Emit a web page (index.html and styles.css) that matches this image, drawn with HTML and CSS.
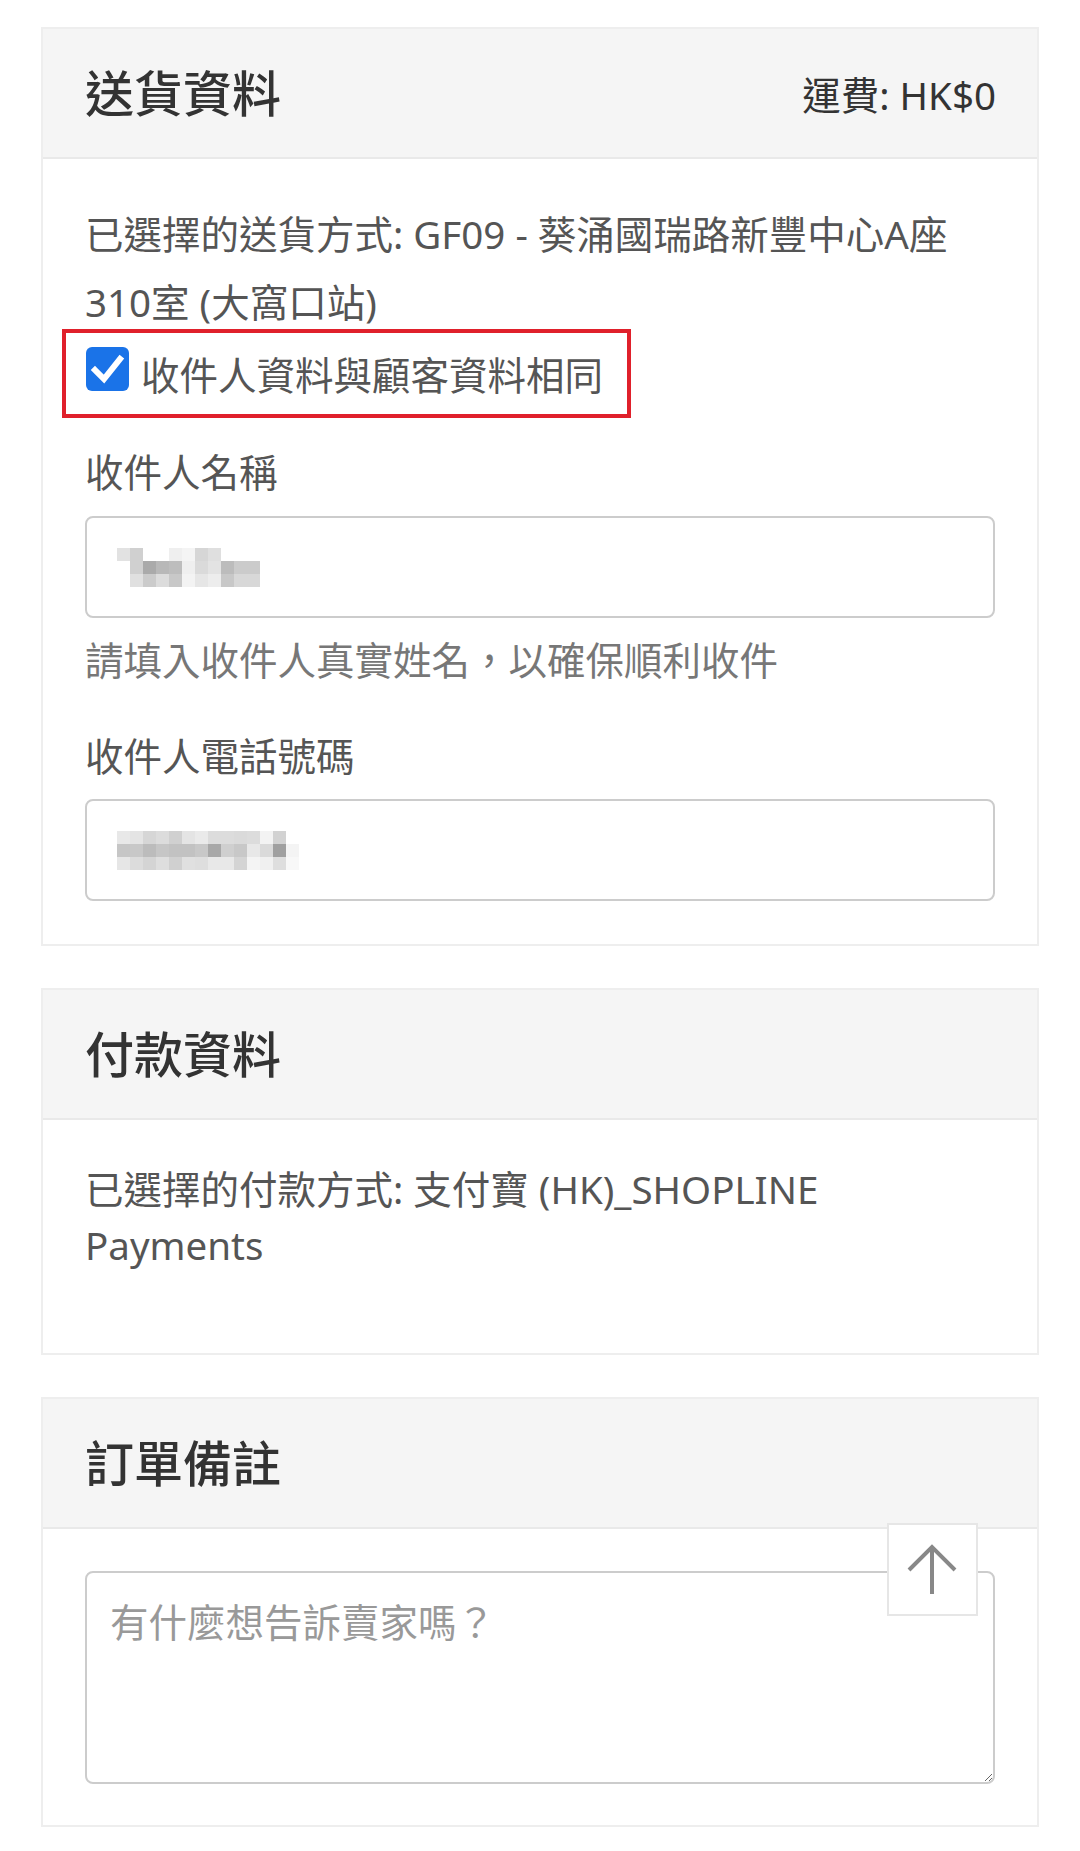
FILE: index.html
```html
<!DOCTYPE html>
<html lang="zh-Hant">
<head>
<meta charset="utf-8">
<title>結帳</title>
<link rel="stylesheet" href="styles.css">
</head>
<body>
<div class="page">
  <section class="card">
    <header class="card-head">
      <h2>送貨資料</h2>
      <span class="fee">運費: HK$0</span>
    </header>
    <div class="card-body">
      <p class="method">已選擇的送貨方式: GF09 - 葵涌國瑞路新豐中心A座310室 (大窩口站)</p>
      <label class="same-row">
        <span class="checkbox"><svg width="43" height="44" viewBox="0 0 43 44"><path d="M9 23 L18 32 L34 12" fill="none" stroke="#fff" stroke-width="6" stroke-linecap="square" stroke-linejoin="miter"/></svg></span>
        <span class="same-text">收件人資料與顧客資料相同</span>
      </label>
      <div class="field-label">收件人名稱</div>
      <div class="input">
        <svg class="mosaic" width="143" height="39" viewBox="0 0 143 39">
          <rect x="0" y="0" width="13" height="13" fill="#e2e2e2"/><rect x="13" y="0" width="13" height="13" fill="#d0d0d0"/><rect x="52" y="0" width="13" height="13" fill="#efefef"/><rect x="65" y="0" width="13" height="13" fill="#f4f4f4"/><rect x="78" y="0" width="13" height="13" fill="#d6d6d6"/><rect x="91" y="0" width="13" height="13" fill="#dfdfdf"/>
          <rect x="13" y="13" width="13" height="13" fill="#d0d0d0"/><rect x="26" y="13" width="13" height="13" fill="#aaaaaa"/><rect x="39" y="13" width="13" height="13" fill="#b8b8b8"/><rect x="52" y="13" width="13" height="13" fill="#bdbdbd"/><rect x="65" y="13" width="13" height="13" fill="#efefef"/><rect x="78" y="13" width="13" height="13" fill="#dadada"/><rect x="91" y="13" width="13" height="13" fill="#e3e3e3"/><rect x="104" y="13" width="13" height="13" fill="#bcbcbc"/><rect x="117" y="13" width="13" height="13" fill="#cbcbcb"/><rect x="130" y="13" width="13" height="13" fill="#cbcbcb"/>
          <rect x="13" y="26" width="13" height="13" fill="#e0e0e0"/><rect x="26" y="26" width="13" height="13" fill="#cbcbcb"/><rect x="39" y="26" width="13" height="13" fill="#dcdcdc"/><rect x="52" y="26" width="13" height="13" fill="#c8c8c8"/><rect x="65" y="26" width="13" height="13" fill="#f3f3f3"/><rect x="78" y="26" width="13" height="13" fill="#e6e6e6"/><rect x="91" y="26" width="13" height="13" fill="#ededed"/><rect x="104" y="26" width="13" height="13" fill="#c8c8c8"/><rect x="117" y="26" width="13" height="13" fill="#d8d8d8"/><rect x="130" y="26" width="13" height="13" fill="#d8d8d8"/>
        </svg>
      </div>
      <div class="help">請填入收件人真實姓名，以確保順利收件</div>
      <div class="field-label second">收件人電話號碼</div>
      <div class="input phone">
        <svg class="mosaic" width="182" height="39" viewBox="0 0 182 39">
          <rect x="0" y="0" width="13" height="13" fill="#e8e8e8"/><rect x="13" y="0" width="13" height="13" fill="#e4e4e4"/><rect x="26" y="0" width="13" height="13" fill="#d6d6d6"/><rect x="39" y="0" width="13" height="13" fill="#dcdcdc"/><rect x="52" y="0" width="13" height="13" fill="#d0d0d0"/><rect x="65" y="0" width="13" height="13" fill="#e4e4e4"/><rect x="78" y="0" width="13" height="13" fill="#eaeaea"/><rect x="91" y="0" width="13" height="13" fill="#dcdcdc"/><rect x="104" y="0" width="13" height="13" fill="#dcdcdc"/><rect x="117" y="0" width="13" height="13" fill="#dadada"/><rect x="130" y="0" width="13" height="13" fill="#dcdcdc"/><rect x="143" y="0" width="13" height="13" fill="#f3f3f3"/><rect x="156" y="0" width="13" height="13" fill="#d2d2d2"/>
          <rect x="0" y="13" width="13" height="13" fill="#c6c6c6"/><rect x="13" y="13" width="13" height="13" fill="#c8c8c8"/><rect x="26" y="13" width="13" height="13" fill="#bcbcbc"/><rect x="39" y="13" width="13" height="13" fill="#c6c6c6"/><rect x="52" y="13" width="13" height="13" fill="#c2c2c2"/><rect x="65" y="13" width="13" height="13" fill="#c2c2c2"/><rect x="78" y="13" width="13" height="13" fill="#c8c8c8"/><rect x="91" y="13" width="13" height="13" fill="#a8a8a8"/><rect x="104" y="13" width="13" height="13" fill="#cfcfcf"/><rect x="117" y="13" width="13" height="13" fill="#c8c8c8"/><rect x="130" y="13" width="13" height="13" fill="#e8e8e8"/><rect x="143" y="13" width="13" height="13" fill="#dadada"/><rect x="156" y="13" width="13" height="13" fill="#a0a0a0"/><rect x="169" y="13" width="13" height="13" fill="#f4f4f4"/>
          <rect x="0" y="26" width="13" height="13" fill="#e6e6e6"/><rect x="13" y="26" width="13" height="13" fill="#dcdcdc"/><rect x="26" y="26" width="13" height="13" fill="#d4d4d4"/><rect x="39" y="26" width="13" height="13" fill="#dedede"/><rect x="52" y="26" width="13" height="13" fill="#d0d0d0"/><rect x="65" y="26" width="13" height="13" fill="#e0e0e0"/><rect x="78" y="26" width="13" height="13" fill="#dedede"/><rect x="91" y="26" width="13" height="13" fill="#e8e8e8"/><rect x="104" y="26" width="13" height="13" fill="#e8e8e8"/><rect x="117" y="26" width="13" height="13" fill="#d4d4d4"/><rect x="130" y="26" width="13" height="13" fill="#f4f4f4"/><rect x="143" y="26" width="13" height="13" fill="#f0f0f0"/><rect x="156" y="26" width="13" height="13" fill="#dedede"/><rect x="169" y="26" width="13" height="13" fill="#f8f8f8"/>
        </svg>
      </div>
    </div>
  </section>

  <section class="card">
    <header class="card-head">
      <h2>付款資料</h2>
    </header>
    <div class="card-body pay-body">
      <p class="pay">已選擇的付款方式: 支付寶 (HK)_SHOPLINE Payments</p>
    </div>
  </section>

  <section class="card">
    <header class="card-head">
      <h2>訂單備註</h2>
    </header>
    <div class="card-body note-body">
      <textarea class="note" placeholder="有什麼想告訴賣家嗎？"></textarea>
    </div>
  </section>
</div>

<a class="to-top" href="#" aria-label="回到頂部">
  <svg width="91" height="93" viewBox="0 0 91 93"><path d="M45 24 V71 M22 47 L45 24 L68 47" fill="none" stroke="#888" stroke-width="4"/></svg>
</a>
</body>
</html>
```

FILE: styles.css
```css
* { box-sizing: border-box; }

body {
  margin: 0;
  background: #fff;
  font-family: "Noto Sans", "Noto Sans CJK TC", sans-serif;
  color: #555;
}

.page {
  padding: 27px 41px 0;
  display: flex;
  flex-direction: column;
  gap: 42px;
}

.card {
  border: 2px solid #eeeeee;
  background: #fff;
}

.card-head {
  height: 130px;
  background: #f5f5f5;
  border-bottom: 2px solid #e9e9e9;
  display: flex;
  align-items: center;
  justify-content: space-between;
  padding: 0 41px 0 42px;
}

.card-head h2 {
  margin: 0;
  font-size: 49px;
  font-weight: 500;
  line-height: 1;
  color: #333;
}

.fee {
  font-size: 38.5px;
  color: #333;
}

.card-body {
  padding: 41px 42px 43px;
}

.method {
  margin: 0;
  font-size: 38.5px;
  line-height: 68px;
  color: #555;
}

.same-row {
  display: flex;
  width: fit-content;
  align-items: flex-start;
  gap: 12px;
  border: 4px solid #e0202b;
  margin: -7px 0 0 -23px;
  padding: 14px 24px 11px 20px;
}

.checkbox {
  width: 43px;
  height: 44px;
  background: #1a73e8;
  border-radius: 6px;
  display: block;
  flex: none;
}

.checkbox svg { display: block; }

.same-text {
  font-size: 38.5px;
  line-height: 56px;
  color: #555;
}

.field-label {
  margin-top: 27px;
  font-size: 38.5px;
  line-height: 54px;
  color: #555;
}

.field-label.second { margin-top: 42px; }

.input {
  margin-top: 17px;
  height: 102px;
  border: 2px solid #cccccc;
  border-radius: 8px;
  display: flex;
  align-items: center;
  padding-left: 30px;
}

.input.phone { margin-top: 16px; }

.mosaic { display: block; }

.help {
  margin-top: 15px;
  font-size: 38.5px;
  line-height: 54px;
  color: #777;
}

.pay-body { padding-bottom: 80px; }

.pay {
  margin: 0;
  font-size: 38.5px;
  line-height: 56px;
  color: #555;
}

.note-body { padding: 42px 42px 41px; }

.note {
  display: block;
  width: 100%;
  height: 213px;
  border: 2px solid #cccccc;
  border-radius: 8px;
  padding: 21px 23px;
  font-family: "Noto Sans", "Noto Sans CJK TC", sans-serif;
  font-size: 38.5px;
  line-height: 56px;
  color: #555;
  background: #fff;
  outline: none;
}

.note::placeholder { color: #999; }

.to-top {
  position: fixed;
  right: 102px;
  bottom: 235px;
  width: 91px;
  height: 93px;
  background: #fff;
  border: 2px solid #e6e6e6;
  display: flex;
  align-items: center;
  justify-content: center;
}

.to-top svg { display: block; flex: none; }
```
